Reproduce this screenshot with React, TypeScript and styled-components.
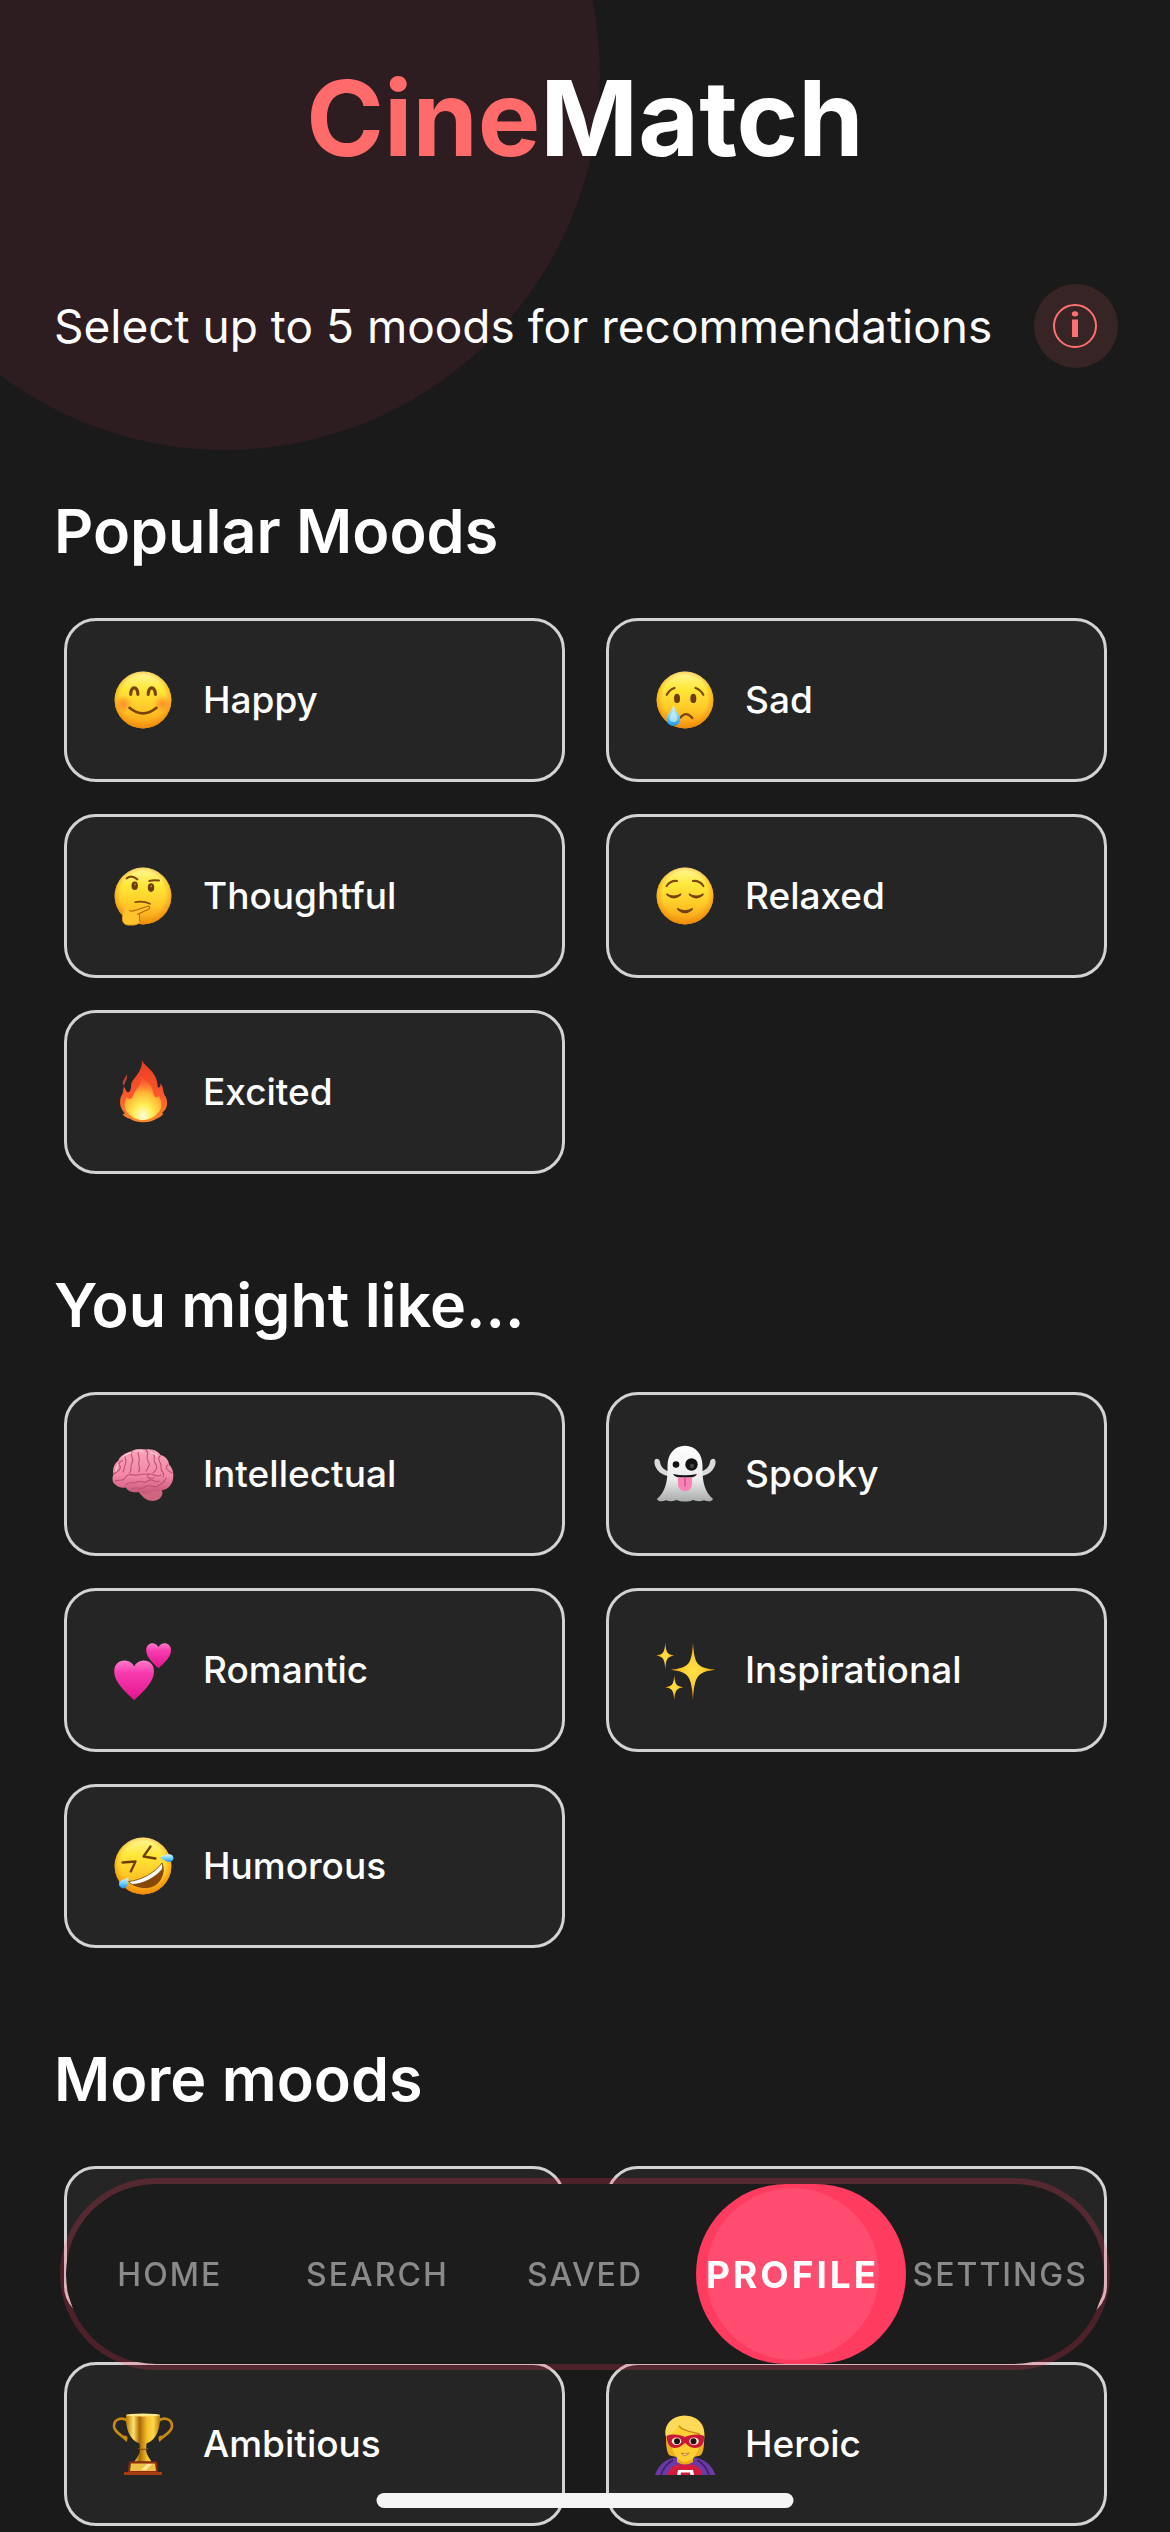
import React, { useState } from "react";
import type { ReactNode } from "react";
import styled, { createGlobalStyle } from "styled-components";

const GlobalStyle = createGlobalStyle`
  * { box-sizing: border-box; }
  body {
    margin: 0;
    background: #1a1a1a;
    color: #ffffff;
    font-family: Inter, "Noto Sans", "Liberation Sans", sans-serif;
  }
  button { font: inherit; color: inherit; }
`;

const Page = styled.main`
  position: relative;
  overflow: hidden;
  min-height: 100vh;
`;

const Glow = styled.div`
  position: absolute;
  top: -300px;
  left: -150px;
  width: 750px;
  height: 750px;
  border-radius: 50%;
  background: #2d1c20;
`;

const Content = styled.div`
  position: relative;
  display: flex;
  flex-direction: column;
`;

const Title = styled.h1`
  margin: 0;
  padding-top: 55px;
  text-align: center;
  font-size: 105px;
  line-height: 126px;
  font-weight: 700;
`;

const Accent = styled.span`
  color: #ff6b6b;
`;

const Intro = styled.div`
  display: flex;
  align-items: center;
  justify-content: space-between;
  padding: 103px 52px 125px 54px;
`;

const IntroText = styled.p`
  margin: 0;
  font-size: 46px;
  line-height: 60px;
`;

const InfoButton = styled.button`
  display: grid;
  place-items: center;
  flex: none;
  width: 84px;
  height: 84px;
  padding: 0;
  border: 0;
  border-radius: 50%;
  background: #372526;
  cursor: pointer;
`;

const Sections = styled.div`
  display: flex;
  flex-direction: column;
  gap: 93px;
`;

const Heading = styled.h2`
  margin: 0 54px 49px;
  font-size: 61px;
  line-height: 76px;
  font-weight: 600;
`;

const Grid = styled.div`
  display: grid;
  grid-template-columns: 1fr 1fr;
  gap: 32px 41px;
  padding: 0 63px 0 64px;
`;

const Card = styled.button<{ $selected?: boolean }>`
  display: flex;
  align-items: center;
  gap: 28px;
  height: 164px;
  padding: 0 44px;
  border: 3px solid ${(p) => (p.$selected ? "#ff3b60" : "#d3d3d3")};
  border-radius: 32px;
  background: #252525;
  font-size: 37px;
  line-height: 44px;
  font-weight: 500;
  font-variant-ligatures: none;
  text-align: left;
  cursor: pointer;
`;

const CardSlot = styled.div`
  height: 152px;
  margin-bottom: 12px;
  border: 3px solid #d3d3d3;
  border-radius: 32px;
  background: #252525;
`;

const NavBar = styled.nav`
  position: fixed;
  left: 60px;
  right: 60px;
  bottom: 162px;
  display: flex;
  height: 192px;
  border: 6px solid rgba(255, 59, 96, 0.22);
  border-radius: 96px;
  background: #1c1c1c;
  background-clip: padding-box;
`;

const NavItem = styled.a<{ $active?: boolean }>`
  position: relative;
  display: flex;
  flex: 1 1 0;
  align-items: center;
  justify-content: center;
  color: ${(p) => (p.$active ? "#ffffff" : "#8a8a8a")};
  font-size: ${(p) => (p.$active ? 37 : 32)}px;
  font-weight: ${(p) => (p.$active ? 700 : 500)};
  letter-spacing: ${(p) => (p.$active ? 3 : 2)}px;
  text-decoration: none;
`;

const NavLabel = styled.span`
  position: relative;
`;

const Pill = styled.span`
  position: absolute;
  top: 0;
  left: 7px;
  width: 210px;
  height: 180px;
  border-radius: 90px;
  background: #ff3b60;
`;

const PillShine = styled.span`
  position: absolute;
  top: 4px;
  left: 10px;
  width: 173px;
  height: 172px;
  border-radius: 50%;
  background: #ff4c6f;
`;

const HomeIndicator = styled.div`
  position: fixed;
  left: 50%;
  bottom: 24px;
  width: 417px;
  height: 15px;
  border-radius: 8px;
  background: #f5f5f5;
  transform: translateX(-50%);
`;

const Picture = ({ children }: { children: ReactNode }) => (
  <svg width="64" height="64" viewBox="0 0 64 64" fill="none" aria-hidden="true">
    {children}
  </svg>
);

const SharedPaint = () => (
  <svg width="0" height="0" style={{ position: "absolute" }} aria-hidden="true">
    <defs>
      <linearGradient id="skin" x1="0" y1="0" x2="0" y2="1">
        <stop offset="0" stopColor="#fff79a" />
        <stop offset=".3" stopColor="#ffe83a" />
        <stop offset=".65" stopColor="#ffc927" />
        <stop offset="1" stopColor="#f79a14" />
      </linearGradient>
      <radialGradient id="rim" cx=".5" cy=".46" r=".54">
        <stop offset=".72" stopColor="#f79a10" stopOpacity="0" />
        <stop offset="1" stopColor="#e9850a" stopOpacity=".8" />
      </radialGradient>
      <radialGradient id="blush">
        <stop offset="0" stopColor="#ff6a2a" stopOpacity=".65" />
        <stop offset="1" stopColor="#ff6a2a" stopOpacity="0" />
      </radialGradient>
      <linearGradient id="tear" x1="0" y1="0" x2="0" y2="1">
        <stop offset="0" stopColor="#d9f5ff" />
        <stop offset=".5" stopColor="#7ad3fb" />
        <stop offset="1" stopColor="#1b93e8" />
      </linearGradient>
      <linearGradient id="flame" x1="0" y1="0" x2="0" y2="1">
        <stop offset="0" stopColor="#e83a25" />
        <stop offset=".55" stopColor="#f9572c" />
        <stop offset="1" stopColor="#fb8a2b" />
      </linearGradient>
      <radialGradient id="core" cx=".5" cy=".9" r=".8">
        <stop offset="0" stopColor="#fffde0" />
        <stop offset=".3" stopColor="#fff05a" />
        <stop offset=".65" stopColor="#ffb836" />
        <stop offset="1" stopColor="#fb7a35" stopOpacity=".3" />
      </radialGradient>
      <linearGradient id="brain" x1="0" y1="0" x2="0" y2="1">
        <stop offset="0" stopColor="#f9a3b8" />
        <stop offset=".6" stopColor="#f287a6" />
        <stop offset="1" stopColor="#c75678" />
      </linearGradient>
      <linearGradient id="heart" x1="0" y1="0" x2="0" y2="1">
        <stop offset="0" stopColor="#ff7ccb" />
        <stop offset=".3" stopColor="#f83cb0" />
        <stop offset="1" stopColor="#e2148c" />
      </linearGradient>
      <linearGradient id="ghost" x1="0" y1="0" x2="0" y2="1">
        <stop offset="0" stopColor="#ffffff" />
        <stop offset=".6" stopColor="#ececec" />
        <stop offset="1" stopColor="#a9abab" />
      </linearGradient>
      <linearGradient id="gold" x1="0" y1="0" x2="1" y2="0">
        <stop offset="0" stopColor="#b87a06" />
        <stop offset=".22" stopColor="#ffe067" />
        <stop offset=".4" stopColor="#a96a06" />
        <stop offset=".62" stopColor="#f6c12c" />
        <stop offset=".8" stopColor="#ffd74c" />
        <stop offset="1" stopColor="#b87a06" />
      </linearGradient>
      <radialGradient id="star">
        <stop offset="0" stopColor="#ffe14a" />
        <stop offset=".5" stopColor="#ffd02e" />
        <stop offset="1" stopColor="#e8871c" />
      </radialGradient>
    </defs>
  </svg>
);

const Face = ({ children }: { children: ReactNode }) => (
  <Picture>
    <circle cx="32" cy="32" r="28.4" fill="url(#skin)" />
    <circle cx="32" cy="32" r="28.4" fill="url(#rim)" />
    {children}
  </Picture>
);

const HappyFace = () => (
  <Face>
    <circle cx="12.500" cy="36" r="9" fill="url(#blush)" />
    <circle cx="51.500" cy="36" r="9" fill="url(#blush)" />
    <g stroke="#7a4304" strokeLinecap="round">
      <path d="M19.700 26.300C19.500 17.800 27 17.800 26.900 26.300" strokeWidth="3.200" />
      <path d="M37.200 26.300C37 17.800 44.500 17.800 44.400 26.300" strokeWidth="3.200" />
      <path d="M18.500 39.800Q32 51 45.500 39.800" strokeWidth="2.600" />
    </g>
  </Face>
);

const SadFace = () => (
  <Face>
    <g stroke="#80480a" strokeWidth="2.200" strokeLinecap="round">
      <path d="M13.800 26.800Q16.500 21.500 21.500 20" />
      <path d="M42.500 20Q47.500 21.500 50.300 26.800" />
      <path d="M27.500 49.500Q33 42.500 39.300 50" strokeWidth="2.400" />
    </g>
    <ellipse cx="24" cy="30.400" rx="3" ry="4.700" fill="#6c3d06" />
    <ellipse cx="40.300" cy="30.400" rx="3" ry="4.700" fill="#6c3d06" />
    <path d="M20.600 36.800C22 43 27.200 47 27.200 51.500A6.800 6.500 0 0 1 13.600 51.500C13.600 47 19 43 20.600 36.800Z" fill="url(#tear)" />
    <path d="M20.500 41C21.500 45 24.500 47.500 24.400 51A4 3.800 0 0 1 16.600 51C16.600 47.500 19.600 45 20.500 41Z" fill="#d6f5ff" opacity=".65" />
  </Face>
);

const ThoughtfulFace = () => (
  <Face>
    <g stroke="#80480a" strokeLinecap="round">
      <path d="M15.700 14.300Q20.500 10.500 26.300 15.300" strokeWidth="2.200" />
      <path d="M38.300 17Q43 15.500 48 16.600" strokeWidth="2" />
      <path d="M24 38.200Q32 36.600 39 39.800" strokeWidth="1.600" />
    </g>
    <ellipse cx="23.700" cy="21.800" rx="3.200" ry="4.300" fill="#6c3d06" />
    <ellipse cx="40" cy="23.600" rx="3.200" ry="4.300" fill="#6c3d06" />
    <circle cx="24" cy="20.500" r="1.100" fill="#b57a30" />
    <circle cx="40.200" cy="22.300" r="1.100" fill="#b57a30" />
    <path d="M15 38.600C17.800 38 17.800 42 18.400 46.600C20.400 48 22 47.300 25 46.200L36 42.500C39.400 41.500 39.500 44.300 37 45.500L30 48.800C31.600 50.600 30.400 52.200 29.500 53C30.200 57.500 28 60.800 23 61L17 61C12 60.500 11 57 11.700 52C12.100 48 13.400 44 13.500 41Z" fill="#ffc42d" />
    <path d="M18.400 46.600C20.400 48 22 47.300 25 46.200L36 42.500C39.400 41.500 39.500 44.300 37 45.500L26.500 50.300M29 49.500L28.500 53.500L29 57.500" stroke="#ba6508" strokeWidth="1.100" strokeLinecap="round" />
    <path d="M11.700 52C11 57 12 60.500 17 61H23Q27 60.800 28.500 58" stroke="#ed9a16" strokeWidth="1" />
  </Face>
);

const RelaxedFace = () => (
  <Face>
    <g stroke="#80480a" strokeWidth="2.200" strokeLinecap="round">
      <path d="M13.600 22Q17.500 16.300 24 17" />
      <path d="M40 17Q46.500 16.300 50.400 22" />
    </g>
    <g fill="#73410a">
      <path d="M13.500 29.200Q20.800 34 28 29.200Q29 30.500 27.500 31.800Q20.800 37 14.200 31.800Q12.600 30.500 13.500 29.200Z" />
      <path d="M36 29.200Q43.300 34 50.500 29.200Q51.400 30.500 49.800 31.800Q43.300 37 36.600 31.800Q35 30.500 36 29.200Z" />
      <path d="M24.200 43.800Q32 48.500 39.800 43.800Q40.400 45 39 46.500Q32 52 25 46.500Q23.600 45 24.200 43.800Z" />
    </g>
  </Face>
);

const Fire = () => (
  <Picture>
    <path d="M31 0C33 7 46.500 10.500 46.800 27.500C48.600 28 49.800 26.500 49.500 23.500C53 27 51.500 33 54.500 36.500C57.500 42 56.500 49 51 53L52.500 54Q49 57.500 46 58.500C37 64 26 63 19.500 59Q14 57.500 11.500 54L14 53.500C8.500 48 7.500 40 11.500 33.500C12.600 31 12 28.500 12.800 26.500C14.500 29 15 31.500 17 32.500C19.500 31.500 20 29 20.200 25.500C20.500 18 31.500 14 31 0Z" fill="url(#flame)" />
    <path d="M16 14.500L12.500 20C11 23 11.800 24.800 13.500 25.500C13.300 22 17 19.500 16 14.500Z" fill="#c44234" />
    <path d="M30 16C34 21 41 23 42 31.500C43 37.500 45 38.500 48 36C51.500 43 51.500 49 46 54C38 62 26 62 19 55C12.500 50 12.500 43 15.500 37C18 40 21 39.500 22.500 35C24.500 28 31.500 26 30 16Z" fill="url(#core)" />
  </Picture>
);

const Brain = () => (
  <Picture>
    <path d="M34 46C40 45 52 44 51.500 51C51 57 45 59.500 39.500 58.800C33.500 58 31 53.500 28 50.500Z" fill="#cf667f" />
    <path d="M5 43C1 41 .8 36 2.500 32.500C.8 26 4.500 20.500 7.500 18.500C9 13 16 11 19.500 9.500C26 6 31 7 35 7.500C42 6.500 48 10 49.500 13C56 14.500 58 20 58 22.500C62 26 63 33 62 37C61 43 57 47 52 48C48 49.500 43 49 40.500 49C37 53 31 51.500 28.500 50C23 51 17 50 15 45.500C11 46 7 45.500 5 43Z" fill="url(#brain)" />
    <g stroke="#bd5273" strokeWidth="1.100" strokeLinecap="round">
      <path d="M3 32C6 29 9 29 9.500 25C6 23 9 19 11.500 18.500M14 12C12 16 17 17 14.500 22S14 28 12 30" />
      <path d="M21 9.500C18 14 24 16 21 21S22 27 18.500 31M28 8C25 13 30 15 28 19.500S31 26 27.500 30" />
      <path d="M35 8C39 12 34 15 37 19S37 25 35 29M42 10C46 14 41 18 44 21S46 28 42 31" />
      <path d="M49 14C45 18 51 20 50 25S55 31 52 35M57 23C53 25 57 29 61 31" />
      <path d="M4 39C9 37 12 40 14 36C17 30 23 34 27 33S35 32 39 32S45 36 50 33M15 43C18 38 22 43 26 40S33 43 37 39S44 42 48 39" />
      <path d="M20 48C24 43 29 49 34 45S43 47 47 44S53 42 55 36M38 32C34 35 39 37 43 36" />
    </g>
    <path d="M12 15Q16 11 20 11M24 9.500Q28 8.500 32 9.500M40 10.500Q44 11 46 14M7 23Q5 26 5 29" stroke="#ffc6d3" strokeWidth="1.500" strokeLinecap="round" />
  </Picture>
);

const Ghost = () => (
  <Picture>
    <path d="M15 34C7 33 .5 25 1.500 19C2 15.500 6.500 16.500 7 20C7.500 25 12 29 17 29.500ZM49 34C57 33 63.500 25 62.500 19C62 15.500 57.500 16.500 57 20C56.500 25 52 29 47 29.500Z" fill="#d9dadb" />
    <path d="M14.500 24C14.500 12 21.500 3.700 32 3.700S49.500 12 49.500 24C49 40 52 50 60 57C59 59.500 55 60 51 58.200C47 59.500 43 59.500 40 58C36 60 28 60 24 58C20 59.500 17 59.500 13 58.200C9 60 5 59.500 4 57C12 50 15 40 14.500 24Z" fill="url(#ghost)" />
    <circle cx="23" cy="22.500" r="3.300" fill="#111" />
    <circle cx="38.500" cy="22.500" r="6.200" fill="#111" />
    <circle cx="39" cy="24" r="2.300" fill="#414141" />
    <path d="M20 32Q32 34.500 44 32Q42.500 35.800 32 36Q21.500 35.800 20 32Z" fill="#151515" />
    <path d="M25 35.200H39V42C39 51.500 25 51.500 25 42Z" fill="#f784b4" />
    <path d="M32 36V44" stroke="#cf4c87" strokeWidth="1.300" strokeLinecap="round" />
  </Picture>
);

const Hearts = () => (
  <Picture>
    <path d="M23.200 62.300C20 58.500 3.200 46 3.200 33.500C3.200 20.500 18.500 19.500 23.200 28.500C28 19.500 43 20.500 43 33.500C43 46 26.500 58.500 23.200 62.300Z" fill="url(#heart)" />
    <path d="M47.500 30.300C45.500 28 35.200 20.500 35.200 12.500C35.200 4 44.500 3 47.500 9C50.500 3 60 4 60 12.500C60 20.500 49.500 28 47.500 30.300Z" fill="url(#heart)" />
  </Picture>
);

const Sparkles = () => (
  <Picture>
    <path d="M40 4.500C41.500 27 44 29.500 62.500 31.800C44 34 41.500 38 40 62C38.500 38 36 34 17.500 31.800C36 29.500 38.500 27 40 4.500Z" fill="url(#star)" />
    <path d="M12.300 4.500C13 15 14.500 16.500 21.300 17.500C14.500 18.700 13 20.500 12.300 31.500C11.600 20.500 10 18.700 3.200 17.500C10 16.500 11.600 15 12.300 4.500Z" fill="url(#star)" />
    <path d="M21.300 37C22 47 23.500 48.200 30.500 49.200C23.500 50.300 22 52 21.300 62C20.600 52 19 50.300 12.200 49.200C19 48.200 20.600 47 21.300 37Z" fill="url(#star)" />
  </Picture>
);

const HumorousFace = () => (
  <Face>
    <path d="M17.500 47.500C30 48.500 45 39.500 51.300 29C56 40 48 53.500 36 54C28 54.500 21.500 52 17.500 47.500Z" fill="#874807" />
    <path d="M17.500 47.500C30 46.500 44.500 38.500 51 29Q52.200 32.500 51.500 35C44 44 32 50 21.500 50.500Q19 49.500 17.500 47.500Z" fill="#fff" stroke="#71400a" strokeWidth=".8" />
    <g stroke="#6f3e08" strokeWidth="2.300" strokeLinecap="round" strokeLinejoin="round">
      <path d="M11.500 28.500L24.500 27.500L19.800 37.500" />
      <path d="M39.500 12.500L32.500 22.500L44.500 24.500" />
    </g>
    <path d="M17.500 43.500C17.500 51 15.500 55 11.500 54.300C6.500 53 7.500 47 11 46Z" fill="url(#tear)" />
    <path d="M49 24C54 19.500 59 19.500 61.500 21.500C64.500 26 59.500 29 56 27.500Z" fill="url(#tear)" />
  </Face>
);

const Trophy = () => (
  <Picture>
    <g stroke="#c98a12" strokeWidth="2.600" strokeLinecap="round">
      <path d="M17 9.500C12 4.500 3 6.500 3 14C3 20 10 22.500 15 27.500C16 24.500 13 24.500 12.500 25.500" />
      <path d="M47 9.500C52 4.500 61 6.500 61 14C61 20 54 22.500 49 27.500C48 24.500 51 24.500 51.500 25.500" />
    </g>
    <path d="M15 3H49C49.500 16 46 27.500 35.500 31.500L35 38C35.500 43 38.500 46 40.500 49.500H23.500C25.500 46 28.500 43 29 38L28.500 31.500C18 27.500 14.500 16 15 3Z" fill="url(#gold)" />
    <ellipse cx="32" cy="3" rx="17" ry="1.500" fill="#ffe88a" />
    <path d="M27 36.500Q32 38.500 37 36.500" stroke="#8b5805" strokeWidth="1.300" />
    <path d="M18 49.500H46L47 60H17Z" fill="#8e2c08" />
    <path d="M13 60H51V63H13Z" fill="#a63c10" />
    <path d="M20 51.500H44L45 59H19Z" fill="#efbf45" />
    <path d="M30 58L36 52H41L35 58Z" fill="#ffe89a" />
  </Picture>
);

const Hero = () => (
  <Picture>
    <path d="M2 63C5 53 13 47 22 45.500H42C51 47 59 53 62.500 63Z" fill="#6c3aa4" />
    <path d="M8 63Q11 53 20 48M56 63Q53 53 44 48" stroke="#41216e" strokeWidth="2" />
    <path d="M15 63C15 57 20 53.500 25 52.500H39C44 53.500 49 57 49 63Z" fill="#d21b3d" />
    <path d="M24 63L25 58H40L41 63H37.500L37 60.500H28L27.500 63Z" fill="#fff" />
    <path d="M24 44H40V50Q32 55 24 50Z" fill="#f1ab19" />
    <path d="M13 23C11 13 20 3.700 32 3.700S53 12 51.300 25C51 33 51 39 48 43C44 46 20 46 16 43C13 38 13 31 13 23Z" fill="#edae1f" />
    <path d="M18 21C18 12 46 12 47 23C48 36 43 49 32 50C22 49 17 36 18 21Z" fill="#ffcf32" />
    <path d="M13 25C10 12 20 3.500 32 3.700C44 4 52 12 51.300 25L48 23C38 21 29 20 26 14C24 18 20 19 18 24Z" fill="#ffd957" />
    <path d="M26 14C31 20 40 20 47 22" stroke="#c88613" strokeWidth="1.300" />
    <path d="M13.500 24C19 21.500 27 22.500 32 25C37 22.500 45 21.500 51 24C51.500 32 48 36 42 36C37 36 35 33 32 31C29 33 27 36 22 36C17 36 14 32 13.500 24Z" fill="#c91836" />
    <ellipse cx="23.500" cy="29.300" rx="4.700" ry="3.800" fill="#fff0c8" />
    <ellipse cx="41" cy="29.300" rx="4.700" ry="3.800" fill="#fff0c8" />
    <circle cx="24" cy="29.300" r="3" fill="#1d1512" />
    <circle cx="40.500" cy="29.300" r="3" fill="#1d1512" />
    <path d="M28 41Q32 43 36 41Q32 46.500 28 41Z" fill="#fff" stroke="#b3661a" strokeWidth=".8" />
  </Picture>
);

interface Mood {
  name: string;
  Icon: () => React.JSX.Element;
}

const popular: Mood[] = [
  { name: "Happy", Icon: HappyFace },
  { name: "Sad", Icon: SadFace },
  { name: "Thoughtful", Icon: ThoughtfulFace },
  { name: "Relaxed", Icon: RelaxedFace },
  { name: "Excited", Icon: Fire },
];

const suggested: Mood[] = [
  { name: "Intellectual", Icon: Brain },
  { name: "Spooky", Icon: Ghost },
  { name: "Romantic", Icon: Hearts },
  { name: "Inspirational", Icon: Sparkles },
  { name: "Humorous", Icon: HumorousFace },
];

const more: Mood[] = [
  { name: "Ambitious", Icon: Trophy },
  { name: "Heroic", Icon: Hero },
];

const navItems = ["HOME", "SEARCH", "SAVED", "PROFILE", "SETTINGS"];

export default function App() {
  const [selected, setSelected] = useState<string[]>([]);

  const toggle = (name: string) =>
    setSelected((now) => {
      if (now.includes(name)) return now.filter((n) => n !== name);
      return now.length < 5 ? [...now, name] : now;
    });

  const cards = (moods: Mood[]) =>
    moods.map(({ name, Icon }) => (
      <Card
        key={name}
        type="button"
        $selected={selected.includes(name)}
        aria-pressed={selected.includes(name)}
        onClick={() => toggle(name)}
      >
        <Icon />
        {name}
      </Card>
    ));

  return (
    <>
      <GlobalStyle />
      <SharedPaint />
      <Page>
        <Glow />
        <Content>
          <Title>
            <Accent>Cine</Accent>Match
          </Title>
          <Intro>
            <IntroText>Select up to 5 moods for recommendations</IntroText>
            <InfoButton type="button" aria-label="Info">
              <svg width="46" height="46" viewBox="0 0 46 46" fill="none" aria-hidden="true">
                <circle cx="22" cy="23" r="21" stroke="#ff7072" strokeWidth="2" />
                <ellipse cx="22" cy="10.800" rx="3.200" ry="2.600" fill="#ff7072" />
                <rect x="19" y="16.500" width="6" height="17.500" fill="#ff7072" />
              </svg>
            </InfoButton>
          </Intro>
          <Sections>
            <section>
              <Heading>Popular Moods</Heading>
              <Grid>{cards(popular)}</Grid>
            </section>
            <section>
              <Heading>You might like...</Heading>
              <Grid>{cards(suggested)}</Grid>
            </section>
            <section>
              <Heading>More moods</Heading>
              <Grid>
                <CardSlot />
                <CardSlot />
                {cards(more)}
              </Grid>
            </section>
          </Sections>
        </Content>
      </Page>
      <NavBar>
        {navItems.map((label) => {
          const active = label === "PROFILE";
          return (
            <NavItem key={label} href="#" $active={active} aria-current={active ? "page" : undefined}>
              {active && (
                <Pill>
                  <PillShine />
                </Pill>
              )}
              <NavLabel>{label}</NavLabel>
            </NavItem>
          );
        })}
      </NavBar>
      <HomeIndicator />
    </>
  );
}
